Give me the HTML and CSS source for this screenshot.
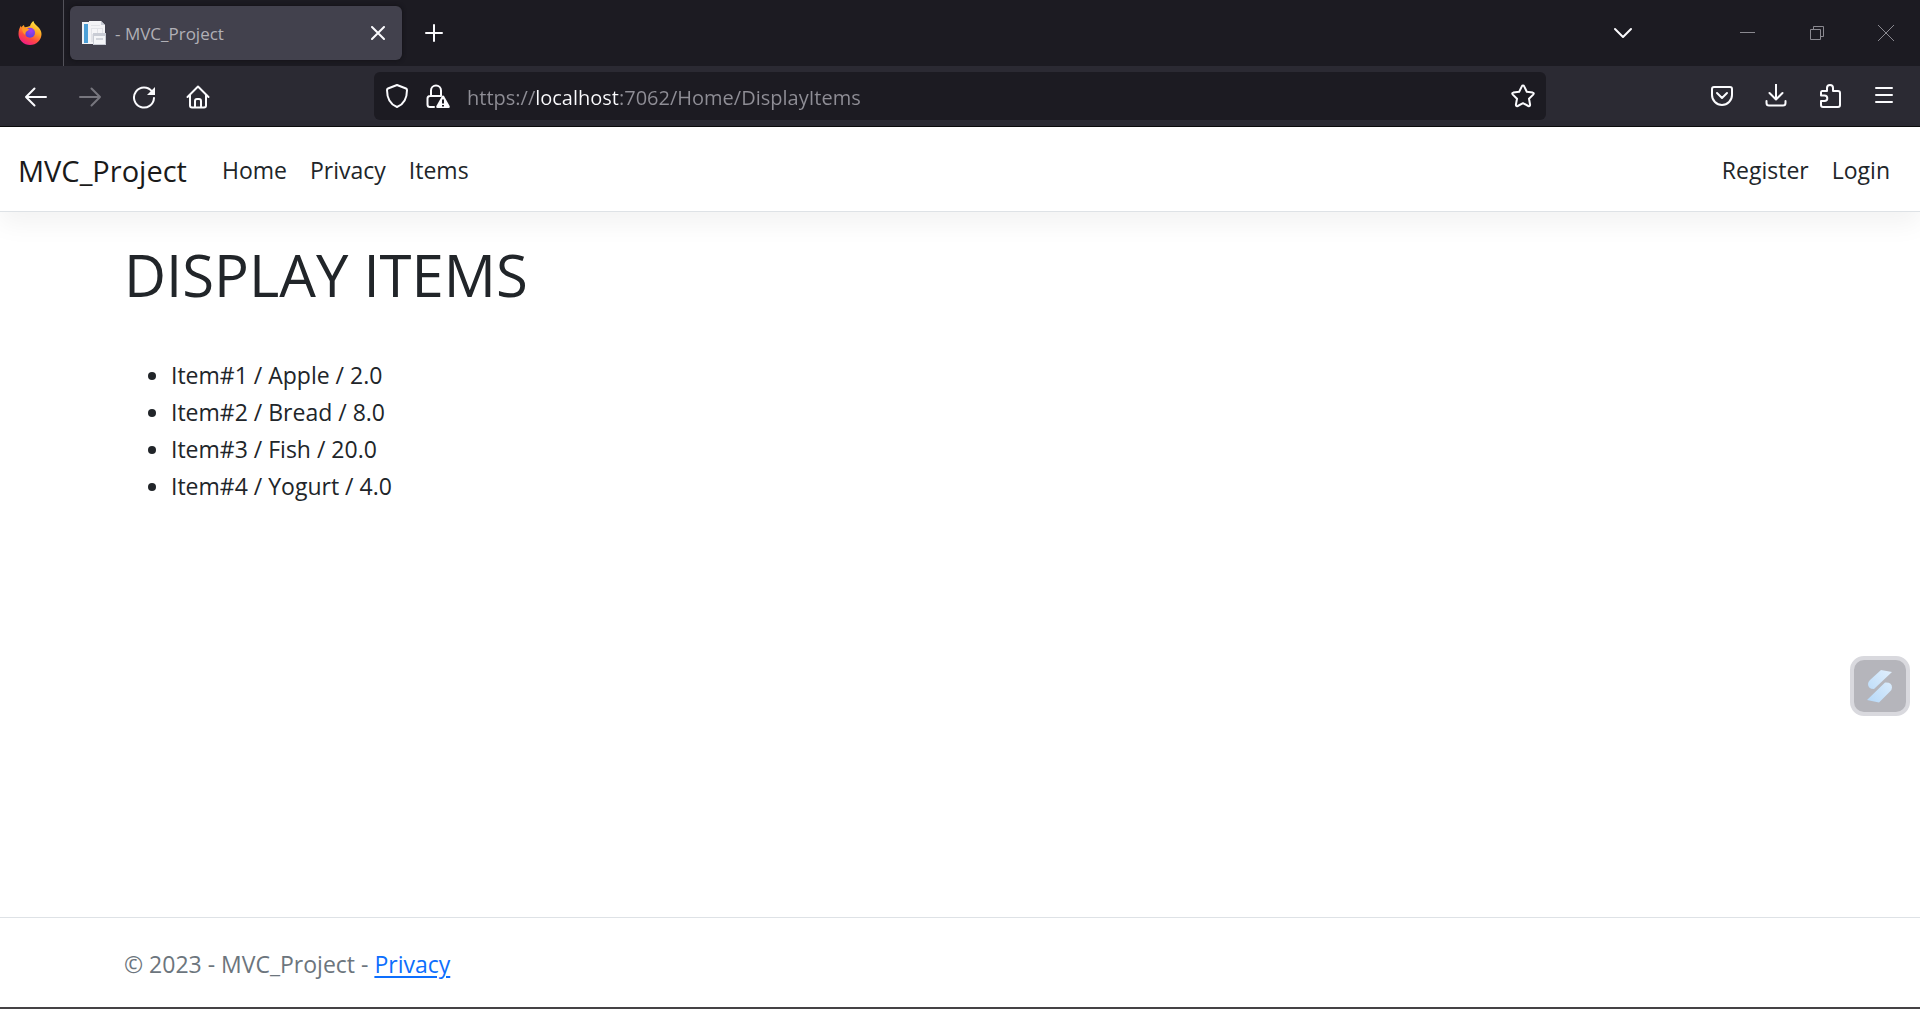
FILE: index.html
```
<!DOCTYPE html>
<html lang="en">
<head>
<meta charset="utf-8">
<meta name="viewport" content="width=device-width, initial-scale=1">
<title> - MVC_Project</title>
<link rel="stylesheet" href="styles.css">
</head>
<body>
<div class="tabstrip">
  <div class="brandmark">
    <svg width="24" height="24" viewBox="0 0 24 24" aria-hidden="true">
      <defs>
        <linearGradient id="flame" x1="0.8" y1="0" x2="0.3" y2="1"><stop offset="0" stop-color="#fff14a"/><stop offset="0.4" stop-color="#ffa423"/><stop offset="0.7" stop-color="#ff4a41"/><stop offset="1" stop-color="#f0188a"/></linearGradient>
        <radialGradient id="globe" cx="0.6" cy="0.3" r="0.8"><stop offset="0" stop-color="#a93cf0"/><stop offset="1" stop-color="#4f43d8"/></radialGradient>
      </defs>
      <path fill="url(#flame)" d="M12 5C12.800 2.500 14 1 15.500 0c.2 2.300 2 3.400 3.800 5.200C22 7.500 23.500 10 23.500 13A11.500 11 0 0 1 .5 13C.5 9.500 1.500 6.500 3 4.500c0 .8.200 1.500.5 2C4 5.600 5 4.500 6 4c0 1 .3 1.700.8 2.200C9 6 11 5.500 12 5z"/>
      <circle cx="12" cy="11.800" r="5" fill="url(#globe)"/>
      <path fill="#ff9726" d="M4 7.500c2-1.500 5-1 7.500 1.300-1.500.7-2.500 1-3.500 2.200-.7 1-.5 2-.8 3C5.500 12.500 4 10 4 7.500z"/>
    </svg>
  </div>
  <div class="tab">
    <svg width="24" height="24" viewBox="0 0 24 24" aria-hidden="true">
      <path fill="#f3f3f6" d="M0 1h7V0h12l4 4v19H0z"/><path fill="#4d9fd6" d="M2 3h4v19H2z"/><path fill="#e2e3e8" d="M9 4h9v1H9zM9 7h12v14H9z"/><path fill="#f5f5f8" d="M10 8h5v5h-5zM16 8h4v4h-4z"/><path fill="#c9ccd5" d="M19 0v4h4zM11 12h13v12H11z"/><path fill="#f4f5f8" d="M12 15h11v8H12z"/><path fill="#d2d5dc" d="M14 17h7v2h-7z"/>
    </svg>
    <span class="tab-title">- MVC_Project</span>
    <button class="icon-btn" aria-label="Close tab"><svg width="14" height="14" viewBox="0 0 14 14"><path d="M1 1l12 12M13 1L1 13"/></svg></button>
  </div>
  <button class="icon-btn new-tab" aria-label="New tab"><svg width="20" height="20" viewBox="0 0 20 20"><path d="M10 2v16M2 10h16"/></svg></button>
  <div class="window-controls">
    <button class="icon-btn" aria-label="List all tabs"><svg width="20" height="12" viewBox="0 0 20 12"><path d="M2 2l8 8 8-8"/></svg></button>
    <div class="system-buttons">
      <button class="icon-btn" aria-label="Minimize"><svg width="16" height="16" viewBox="0 0 16 16"><path d="M0 7.500h15"/></svg></button>
      <button class="icon-btn" aria-label="Restore"><svg width="16" height="16" viewBox="0 0 16 16"><path d="M1.500 4.500h10v10h-10zM4.500 4.500v-3h10v10h-3"/></svg></button>
      <button class="icon-btn" aria-label="Close window"><svg width="16" height="16" viewBox="0 0 16 16"><path d="M0 0l16 16M16 0L0 16"/></svg></button>
    </div>
  </div>
</div>

<div class="toolbar">
  <div class="nav-buttons">
    <button class="icon-btn" aria-label="Back"><svg width="24" height="24" viewBox="0 0 24 24"><path d="M22 12H2M10.500 3.500L2 12l8.500 8.500"/></svg></button>
    <button class="icon-btn dim" aria-label="Forward"><svg width="24" height="24" viewBox="0 0 24 24"><path d="M2 12h20M13.500 3.500L22 12l-8.500 8.500"/></svg></button>
    <button class="icon-btn" aria-label="Reload"><svg width="24" height="24" viewBox="0 0 24 24"><path d="M20 6.500A10 10 0 1 0 22 13"/><path class="solid" d="M23 2v8h-8z"/></svg></button>
    <button class="icon-btn" aria-label="Home"><svg width="24" height="24" viewBox="0 0 24 24"><path d="M1.500 12L12 1.500 22.500 12M4 10v10.500q0 2 2 2h12q2 0 2-2V10M9 22v-6q0-2 2-2h2q2 0 2 2v6"/></svg></button>
  </div>
  <div class="urlbar">
    <button class="icon-btn" aria-label="Tracking protection"><svg width="24" height="24" viewBox="0 0 24 24"><path d="M12 1l9 3.500q1 .5 1 1.500C22 14 18.500 20.500 12 23 5.500 20.500 2 14 2 6q0-1 1-1.500z"/></svg></button>
    <button class="icon-btn" aria-label="Connection not secure"><svg width="24" height="24" viewBox="0 0 24 24"><path d="M8 23H4q-2.500 0-2.500-2.500v-6Q1.500 12 4 12h10M5 12V6.500a5 5 0 0 1 10 0V12"/><path class="solid" d="M17 11.500q.8 0 1.300.9l5.300 9.600q.6 2-1 2H11.400q-1.600 0-1-2l5.300-9.600q.5-.9 1.300-.9z"/><path class="cut" d="M17 15.500v4M17 21v1.500"/></svg></button>
    <input class="url" type="text" aria-label="Address" spellcheck="false" value="https://localhost:7062/Home/DisplayItems">
    <button class="icon-btn" aria-label="Bookmark this page"><svg width="24" height="24" viewBox="0 0 24 24"><path d="M12 1.500q.8 0 1.200.9l2.600 5.400 5.900.8q1.800.5.500 2L18 14.800l1.100 6q0 1.800-1.800 1.200L12 19.200 6.700 22q-1.800.6-1.800-1.200l1.100-6-4.200-4.200q-1.300-1.500.5-2l5.900-.8 2.600-5.400q.4-.9 1.200-.9z"/></svg></button>
  </div>
  <div class="tool-buttons">
    <button class="icon-btn" aria-label="Save to Pocket"><svg width="24" height="24" viewBox="0 0 24 24"><path d="M4 3h16q2 0 2 2v6a10 10 0 0 1-20 0V5q0-2 2-2zM7 9l5 5 5-5"/></svg></button>
    <button class="icon-btn" aria-label="Downloads"><svg width="24" height="24" viewBox="0 0 24 24"><path d="M12 0v15M5.500 9l6.500 6.500L18.500 9M2.500 17v2q0 2.500 2.500 2.500h14q2.500 0 2.500-2.500v-2"/></svg></button>
    <button class="icon-btn" aria-label="Extensions"><svg width="24" height="24" viewBox="0 0 24 24"><path d="M4 7h5V4a3 3 0 0 1 6 0v3h5q2 0 2 2v12q0 2-2 2H5q-2 0-2-2v-4h3.500a2.800 2.800 0 0 0 0-5.600H3V8.500Q3 7 4 7z"/></svg></button>
    <button class="icon-btn" aria-label="Open application menu"><svg width="24" height="24" viewBox="0 0 24 24"><path d="M4 4h16M4 11h16M4 18h16"/></svg></button>
  </div>
</div>

<div class="page">
  <header>
    <nav class="navbar">
      <a class="navbar-brand" href="#">MVC_Project</a>
      <a class="nav-link" href="#">Home</a>
      <a class="nav-link" href="#">Privacy</a>
      <a class="nav-link" href="#">Items</a>
      <a class="nav-link push" href="#">Register</a>
      <a class="nav-link" href="#">Login</a>
    </nav>
  </header>
  <main class="container">
    <h1>DISPLAY ITEMS</h1>
    <ul>
      <li>Item#1 / Apple / 2.0</li>
      <li>Item#2 / Bread / 8.0</li>
      <li>Item#3 / Fish / 20.0</li>
      <li>Item#4 / Yogurt / 4.0</li>
    </ul>
  </main>
  <footer>
    <div class="container">© 2023 - MVC_Project - <a href="#">Privacy</a></div>
  </footer>
  <button class="floating" aria-label="Assistant">
    <svg width="26" height="34" viewBox="0 0 26 34"><defs><linearGradient id="ice" x1="1" y1="0" x2="0" y2="1"><stop offset="0" stop-color="#e2f0fd"/><stop offset="1" stop-color="#b5d8f8"/></linearGradient></defs><path fill="url(#ice)" d="M14 1l11 2L7 20Q1 20 1 15 1 13 3 11zM18 13.500q7-.5 7 5 0 2-2 4L12 33.500 0 31z"/></svg>
  </button>
</div>
</body>
</html>
```
FILE: styles.css
```
* { box-sizing: border-box; }

body {
  margin: 0;
  min-height: 100vh;
  display: flex;
  flex-direction: column;
  background: #fff;
  color: #212529;
  font: 23px/37px "Open Sans", "Noto Sans", sans-serif;
}

/* Browser chrome */
.icon-btn {
  display: flex;
  align-items: center;
  justify-content: center;
  flex: none;
  padding: 0;
  border: 0;
  background: none;
  color: #fbfbfe;
}
.icon-btn path { fill: none; stroke: currentColor; stroke-width: 2; stroke-linecap: round; stroke-linejoin: round; }
.icon-btn .solid { fill: currentColor; stroke: none; }
.icon-btn .cut { stroke: #1c1b22; stroke-linecap: butt; }
.icon-btn.dim { color: #77767e; }

.tabstrip {
  display: flex;
  align-items: center;
  height: 66px;
  background: #1c1b22;
}
.brandmark {
  display: flex;
  align-items: center;
  align-self: stretch;
  width: 64px;
  padding-left: 18px;
  border-right: 1px solid #53525a;
}
.tab {
  display: flex;
  align-items: center;
  gap: 9px;
  width: 332px;
  height: 54px;
  margin-left: 6px;
  padding: 0 17px 0 12px;
  border-radius: 6px;
  background: #42414d;
  box-shadow: 0 0 4px #111015;
}
.tab-title { flex: 1; color: #b1b0b6; font-size: 17px; }
.new-tab { margin-left: 22px; }
.window-controls { display: flex; align-items: center; gap: 107px; margin-left: auto; padding-right: 26px; }
.system-buttons { display: flex; gap: 53px; }
.system-buttons .icon-btn { color: #8a8990; }
.system-buttons path { stroke-width: 1; stroke-linecap: butt; stroke-linejoin: miter; }

.toolbar {
  display: flex;
  align-items: center;
  justify-content: space-between;
  height: 61px;
  padding: 0 24px;
  border-bottom: 1px solid #0c0c0d;
  background: #2b2a33;
}
.nav-buttons, .tool-buttons { display: flex; gap: 30px; }
.nav-buttons { padding-top: 2px; }
.urlbar {
  display: flex;
  align-items: center;
  gap: 17px;
  width: calc(100% - 700px);
  height: 48px;
  padding: 0 11px;
  border-radius: 6px;
  background: #1c1b22;
}
/* The host name is brighter than the rest of the address. */
.url {
  flex: 1;
  min-width: 0;
  height: 36px;
  padding: 2px 0 0;
  border: 0;
  outline: 0;
  background: linear-gradient(90deg, #8f8e96 68px, #fbfbfe 68px 152px, #8f8e96 152px);
  background-clip: text;
  -webkit-background-clip: text;
  color: transparent;
  caret-color: #fbfbfe;
  font: inherit;
  font-size: 20px;
}

/* Page */
.page { position: relative; display: flex; flex: 1; flex-direction: column; border-bottom: 2px solid #454345; }
.navbar {
  display: flex;
  align-items: center;
  gap: 23px;
  height: 85px;
  padding: 2px 30px 0 18px;
  border-bottom: 1px solid #dee2e6;
  box-shadow: 0 12px 24px rgba(0, 0, 0, .05);
}
.navbar a { color: #212529; text-decoration: none; }
.navbar .navbar-brand { margin-right: 12px; color: #1a1a1a; font-size: 29px; }
.navbar .push { margin-left: auto; }
.container { width: 100%; padding: 0 124px; }
main { flex: 1; }
h1 { margin: 27px 0 0; font-size: 58px; font-weight: 400; line-height: 72px; }
ul { margin: 46px 0 0; padding-left: 47px; }
footer { padding-top: 4px; border-top: 1px solid #dee2e6; color: #6c757d; line-height: 85px; }
footer a { color: #0d6efd; text-underline-offset: 3px; }
.floating {
  position: absolute;
  right: 10px;
  bottom: 291px;
  display: flex;
  align-items: center;
  justify-content: center;
  width: 60px;
  height: 60px;
  padding: 0;
  border: 4px solid #d9d9de;
  border-radius: 14px;
  background: #b5b5bb;
}
```
